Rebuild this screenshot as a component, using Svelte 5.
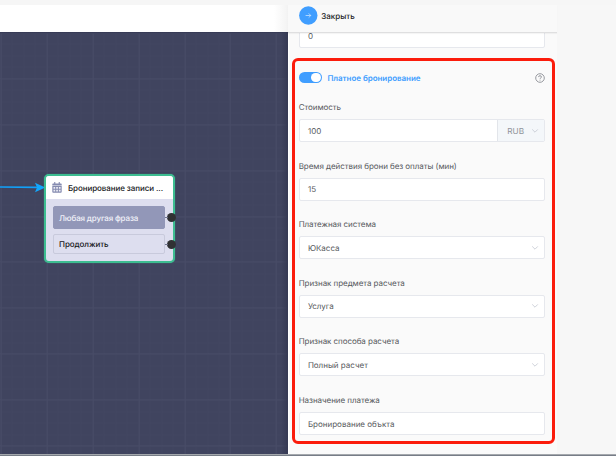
<script>
  const fields = [
    { label: 'Стоимость', value: '100', currency: 'RUB' },
    { label: 'Время действия брони без оплаты (мин)', value: '15' },
    { label: 'Платежная система', value: 'ЮКасса', select: true },
    { label: 'Признак предмета расчета', value: 'Услуга', select: true },
    { label: 'Признак способа расчета', value: 'Полный расчет', select: true },
    { label: 'Назначение платежа', value: 'Бронирование объкта' }
  ];
</script>

{#snippet chevron()}
  <svg class="chevron" viewBox="0 0 8 6" width="8" height="6"><path d="M1.2 1.4 4 4.2 6.8 1.4" /></svg>
{/snippet}

<div class="app">
  <div class="strip"></div>
  <div class="main">
    <div class="left">
      <div class="toolbar"></div>
      <div class="canvas">
        <svg class="arrow" width="48" height="14" viewBox="0 0 48 14">
          <path d="M0 7 L38 7.4" stroke="#12a0f8" stroke-width="1.7" />
          <path d="M35 2.8 45.3 7.6 35 12.2 37 7.5Z" fill="#12a6fb" />
        </svg>
        <div class="node">
          <div class="node-head">
            <svg width="10" height="11" viewBox="0 0 10 11">
              <path d="M1 1.5H9Q9.7 1.5 9.7 2.2V3.5H.3V2.2Q.3 1.5 1 1.5ZM2.2 0H3.3V2H2.2ZM6.7 0H7.8V2H6.7ZM.3 4H9.7V9.8Q9.7 10.7 8.8 10.7H1.2Q.3 10.7.3 9.8Z" fill="#858bb0" />
              <path d="M1.5 5H3.2V6.7H1.5ZM4.2 5H5.9V6.7H4.2ZM6.9 5H8.6V6.7H6.9ZM1.5 7.8H3.2V9.5H1.5ZM4.2 7.8H5.9V9.5H4.2ZM6.9 7.8H8.6V9.5H6.9Z" fill="#eeeff6" />
            </svg>
            <span>Бронирование записи ...</span>
          </div>
          <div class="node-body">
            <div class="option filled"><span>Любая другая фраза</span><i class="port"></i></div>
            <div class="option"><span>Продолжить</span><i class="port"></i></div>
          </div>
        </div>
      </div>
    </div>
    <div class="panel">
      <div class="panel-head">
        <svg width="19" height="19" viewBox="0 0 19 19">
          <circle cx="9.3" cy="9.5" r="9.2" fill="#409eff" />
          <path d="M6.6 9.5H11.8M9.7 7.4 11.8 9.5 9.7 11.6" fill="none" stroke="#d8ebff" stroke-width=".7" />
        </svg>
        <span>Закрыть</span>
      </div>
      <div class="panel-body">
        <div class="input cut"><span>0</span></div>
        <div class="highlight">
          <div class="toggle-row">
            <span class="switch"><i></i></span>
            <span class="toggle-label">Платное бронирование</span>
            <svg class="help" width="10" height="10" viewBox="0 0 10 10">
              <circle cx="5" cy="5" r="4.3" />
              <path d="M3.6 4.1Q3.6 2.7 5 2.7T6.4 4Q6.4 4.7 5.6 5.1Q5 5.4 5 6.1M5 6.8V7.6" />
            </svg>
          </div>
          {#each fields as f}
            <div class="field">
              <div class="label">{f.label}</div>
              <div class="input">
                <span>{f.value}</span>
                {#if f.currency}
                  <div class="append"><span>{f.currency}</span>{@render chevron()}</div>
                {:else if f.select}
                  {@render chevron()}
                {/if}
              </div>
            </div>
          {/each}
        </div>
        <div class="next">Ошибка</div>
      </div>
    </div>
    <div class="rest"></div>
  </div>
  <div class="bottom"></div>
</div>

<style>
  .app {
    width: 616px; height: 456px; overflow: hidden; display: flex; flex-direction: column;
    font-family: Inter, "Liberation Sans", sans-serif; font-size: 8px; color: #56585c; background: #f7f7f7;
    text-rendering: geometricPrecision;
  }
  .app * { box-sizing: border-box; }
  svg { display: block; flex: none; }
  .strip { height: 5px; flex: none; background: #f6f6f6; }
  .main { display: flex; height: 449px; flex: none; }
  .left { width: 287.5px; flex: none; display: flex; flex-direction: column; }
  .toolbar { height: 27px; flex: none; background: linear-gradient(90deg, #fff 274px, #f3f3f3); }
  .canvas {
    position: relative; flex: 1; background-color: #40445f;
    background-image:
      linear-gradient(90deg, transparent 281px, #353953 288px),
      linear-gradient(#333752, transparent 2px),
      repeating-linear-gradient(90deg, #484c67 0 1px, transparent 1px 45.9px),
      repeating-linear-gradient(#484c67 0 1px, transparent 1px 45.9px),
      repeating-linear-gradient(90deg, #424661 0 1px, transparent 1px 11.475px),
      repeating-linear-gradient(#424661 0 1px, transparent 1px 11.475px);
    background-position: 0 0, 0 0, .7px 0, 0 .4px, .7px 0, 0 .4px;
  }
  .arrow { position: absolute; left: 0; top: 148px; }
  .node {
    position: absolute; left: 44px; top: 142px; width: 130.5px; height: 89px; border: 2px solid #3dbd91;
    border-radius: 5px; background: #dddeef; box-shadow: 0 0 1px #3dbd91;
  }
  .node-head {
    height: 23px; display: flex; align-items: center; gap: 6.5px; padding: 0 0 0 5.5px; background: #fff;
    border-radius: 3px 3px 0 0; color: #17181c; font-size: 8px; font-weight: 500; white-space: nowrap; letter-spacing: -.08px;
  }
  .node-body { padding: 7px 7.5px 0 7px; display: flex; flex-direction: column; gap: 5px; }
  .option {
    position: relative; height: 20px; border: 1px solid #c8cadc; border-radius: 2px; display: flex; align-items: center;
    padding-left: 5px; color: #17181c; font-weight: 500; font-size: 8px; white-space: nowrap; letter-spacing: -.08px;
  }
  .option.filled { height: 23px; border-color: #9297b8; background: #9297b8; color: #f0f1f8; }
  .option.filled span { letter-spacing: -.15px; }
  .port { position: absolute; right: -12px; top: 50%; margin-top: -4.5px; width: 9px; height: 9px; border-radius: 50%; background: #303133; }
  .port::before { content: ''; position: absolute; left: -2px; top: 4px; width: 3px; height: 1px; background: #70758f; }
  .panel { width: 269.5px; flex: none; display: flex; flex-direction: column; background: #fafafa; }
  .panel-head {
    height: 27.5px; flex: none; display: flex; align-items: center; gap: 3.6px; padding: 0 0 5px 11.2px; background: #f9f9f9;
    border-bottom: 1px solid #dfdfe0; box-shadow: 0 1px 1px #0000000a; color: #222326; font-weight: 500; font-size: 8px; z-index: 1;
  }
  .panel-body { flex: 1; overflow: hidden; border-left: 1px solid #fff; padding-left: 3.7px; }
  .input {
    height: 23px; border: 1px solid #e6e8ed; border-radius: 2px; background: #fff; display: flex; align-items: center;
    padding-left: 8.2px; font-size: 8px; white-space: nowrap;
  }
  .input.cut { margin: -8px 0 0 6.5px; width: 246.6px; }
  .highlight { margin-top: 10.5px; width: 263px; height: 386px; border: 3px solid #fb1c0c; border-radius: 6px; padding: 10.7px 6.9px 0 3.5px; }
  .toggle-row { height: 12px; display: flex; align-items: center; margin-bottom: 17.4px; }
  .switch { width: 23px; height: 11.5px; border-radius: 6px; background: #409eff; padding: 1px; display: flex; justify-content: flex-end; }
  .switch i { width: 9.5px; height: 9.5px; border-radius: 50%; background: #fff; }
  .toggle-label { margin-left: 5.7px; flex: 1; color: #409eff; font-weight: 600; white-space: nowrap; letter-spacing: -.04px; }
  .help { fill: none; stroke: #8c8f95; stroke-width: .9; }
  .field { height: 58.6px; }
  .label { height: 12px; line-height: 12px; margin-bottom: 6px; white-space: nowrap; font-size: 8px; letter-spacing: -.06px; }
  .chevron { margin-left: auto; margin-right: 5px; fill: none; stroke: #c3c7d0; stroke-width: .8; }
  .append {
    margin-left: auto; width: 47px; height: 21px; border-left: 1px solid #e2e5ea; background: #f4f7fa; color: #909399;
    display: flex; align-items: center; padding-left: 9px; font-size: 8.2px;
  }
  .next { margin: 7px 0 0 6.5px; line-height: 12px; font-size: 8px; }
  .bottom { height: 2px; flex: none; background: linear-gradient(#a4a8ad 50%, #777d87 50%); }
</style>
